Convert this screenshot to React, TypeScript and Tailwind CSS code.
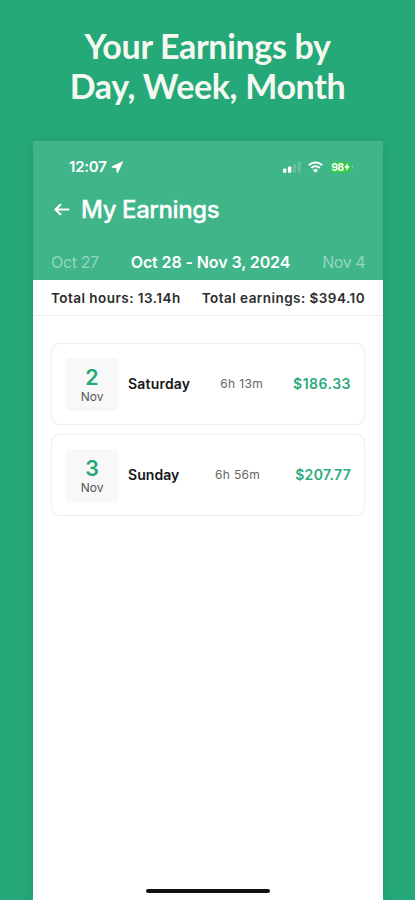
import React from "react";

type Shift = {
  day: string;
  month: string;
  weekday: string;
  duration: string;
  amount: string;
  weekdayClass: string;
  durationClass: string;
  amountClass: string;
};

const shifts: Shift[] = [
  {
    day: "2",
    month: "Nov",
    weekday: "Saturday",
    duration: "6h 13m",
    amount: "$186.33",
    weekdayClass: "tracking-[0.2px]",
    durationClass: "mr-[30px]",
    amountClass: "tracking-[0.5px]",
  },
  {
    day: "3",
    month: "Nov",
    weekday: "Sunday",
    duration: "6h 56m",
    amount: "$207.77",
    weekdayClass: "tracking-[0.05px]",
    durationClass: "mr-[35px]",
    amountClass: "tracking-[0.3px]",
  },
];

function StatusBar() {
  return (
    <div className="flex h-[52px] items-center pl-[36px] pr-[30px] text-white">
      <span className="text-[15px] font-semibold leading-5 tracking-[-0.2px]">12:07</span>
      <svg className="ml-[4px]" width="13" height="12" viewBox="0 0 12 12" fill="currentColor">
        <path d="M11.3.7 .7 5.5c-.5.3-.4.9.2.9h4.5v4.6c0 .6.7.7.9.2Z" stroke="currentColor" strokeWidth=".8" strokeLinejoin="round" />
      </svg>
      <svg className="ml-auto" width="18" height="12" viewBox="0 0 18 12" fill="currentColor">
        <rect x="0" y="7.5" width="3.4" height="4.3" rx=".8" />
        <rect x="4.9" y="5.5" width="3.4" height="6.3" rx=".8" />
        <rect x="9.9" y="3" width="3.2" height="8.8" rx=".8" opacity=".18" />
        <rect x="14.6" y=".5" width="3.2" height="11.3" rx=".8" opacity=".18" />
      </svg>
      <svg className="ml-[7px]" width="15" height="12" viewBox="0 0 15 12" fill="none" stroke="currentColor" strokeWidth="2.1">
        <path d="M.8 4.2a9.6 9.6 0 0 1 13.4 0" />
        <path d="M3.3 7a6 6 0 0 1 8.4 0" />
        <path d="M7.5 11.8 5.1 9.3a3.4 3.4 0 0 1 4.8 0Z" fill="currentColor" stroke="none" />
      </svg>
      <div className="ml-[7px] flex h-[11px] w-[21px] items-center justify-center rounded-[4px] bg-[#35cb4b] text-[10px] font-bold leading-none tracking-[-0.4px]">
        98
        <svg width="6" height="8" viewBox="0 0 6 8" fill="currentColor">
          <path d="M3.8 0 .2 4.7h2.1L2 8l3.8-4.9H3.5Z" />
        </svg>
      </div>
      <div className="ml-px h-1 w-px rounded-r bg-white/30" />
    </div>
  );
}

function ShiftCard({ shift }: { shift: Shift }) {
  return (
    <div className="flex h-[82px] items-center rounded-[9px] border border-[#efefef] bg-white px-[13px] shadow-[0_0_2px_rgba(0,0,0,0.06)]">
      <div className="flex h-[53px] w-[54px] flex-col items-center rounded-[5px] bg-[#f8f8f8] pt-[7px]">
        <span className="text-[21.5px] font-semibold leading-6 text-[#26a878]">{shift.day}</span>
        <span className="text-[12px] leading-4 text-[#555]">{shift.month}</span>
      </div>
      <span className={"ml-[9px] text-[14px] font-semibold leading-5 text-[#161616] " + shift.weekdayClass}>{shift.weekday}</span>
      <span className={"ml-auto text-[12px] leading-5 tracking-[0.35px] text-[#666] " + shift.durationClass}>{shift.duration}</span>
      <span className={"text-[14px] font-semibold leading-5 text-[#2eaa7c] " + shift.amountClass}>{shift.amount}</span>
    </div>
  );
}

export default function App() {
  return (
    <div className="flex h-[900px] w-[415px] flex-col overflow-hidden bg-[#26a978] font-['Inter',sans-serif]">
      <h1 className="h-[141px] shrink-0 pt-[26px] text-center font-['Lato',sans-serif] text-[34px] font-bold leading-[40px] tracking-[-0.34px] text-[#f5f8f1]">
        Your Earnings by
        <br />
        Day, Week, Month
      </h1>
      <div className="ml-[33px] flex w-[350px] grow flex-col bg-white shadow-[0_0_12px_rgba(0,80,50,0.2)]">
        <header className="flex h-[139px] shrink-0 flex-col bg-[#40b58a]">
          <StatusBar />
          <div className="flex h-[34px] items-center pl-[21px] text-white">
            <svg width="16" height="14" viewBox="0 0 16 14" fill="none" stroke="currentColor" strokeWidth="2.2" strokeLinecap="round" strokeLinejoin="round">
              <path d="M14.5 6.5H1.5M6.3 1.8l-4.8 4.7 4.8 4.7" />
            </svg>
            <span className="ml-[11px] text-[24px] font-medium leading-8 tracking-[-0.4px] [-webkit-text-stroke:0.3px_white]">My Earnings</span>
          </div>
          <div className="mt-[24px] flex h-[22px] items-center justify-between px-[18px] text-[16px] text-white/45">
            <span className="w-[50px] tracking-[-0.35px]">Oct 27</span>
            <span className="font-semibold tracking-[-0.1px] text-white">Oct 28 - Nov 3, 2024</span>
            <span className="w-[45px] text-right tracking-[-0.5px]">Nov 4</span>
          </div>
        </header>
        <div className="flex h-[36px] shrink-0 items-center justify-between border-b border-[#ededed] px-[18px] pt-px text-[13.5px] font-semibold text-[#2d2d2d]">
          <span className="tracking-[0.46px]">Total hours: 13.14h</span>
          <span className="tracking-[0.45px]">Total earnings: $394.10</span>
        </div>
        <main className="mt-[27px] flex flex-col gap-[9px] px-[18px]">
          {shifts.map((s) => (
            <ShiftCard key={s.day} shift={s} />
          ))}
        </main>
        <div className="mx-auto mt-auto mb-[7px] h-[4px] w-[124px] rounded-full bg-[#111]" />
      </div>
    </div>
  );
}
